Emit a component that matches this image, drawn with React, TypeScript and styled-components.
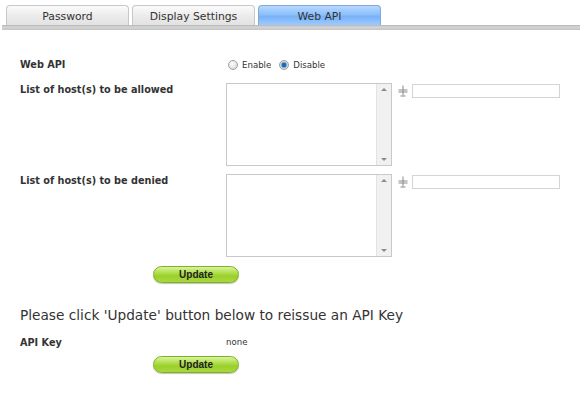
import * as React from 'react';
import { useState } from 'react';
import styled, { createGlobalStyle } from 'styled-components';

const GlobalStyle = createGlobalStyle`
  html, body {
    margin: 0;
    padding: 0;
    background: #ffffff;
  }
  body {
    font-family: "DejaVu Sans", Verdana, sans-serif;
    color: #333333;
  }
`;

const Page = styled.div`
  width: 580px;
  height: 399px;
  overflow: hidden;
  background: #fff;
`;

const TabBar = styled.div`
  display: flex;
  gap: 3px;
  padding: 5px 0 0 6px;
  height: 20px;
`;

const Tab = styled.div<{ $active?: boolean }>`
  width: 123px;
  height: 20px;
  box-sizing: border-box;
  border: 1px solid ${(p) => (p.$active ? '#7fa8dc' : '#c8c8c8')};
  border-bottom: none;
  border-radius: 4px 4px 0 0;
  background: ${(p) =>
    p.$active
      ? 'linear-gradient(#b8d8ff 0%, #8cc0fb 45%, #78b2f8 55%, #9ccaff 100%)'
      : 'linear-gradient(#fbfbfb 0%, #ececec 50%, #e2e2e2 100%)'};
  display: flex;
  align-items: center;
  justify-content: center;
  font-family: "DejaVu Sans", Verdana, sans-serif;
  font-size: 10.8px;
  color: #333;
  padding-top: 2px;
`;

const TabLine = styled.div`
  height: 5px;
  margin-left: 2px;
  background: linear-gradient(#b4b4b4 0%, #d6d6d6 40%, #c4c4c4 100%);
`;

const Content = styled.div`
  padding: 28px 0 0 20px;
`;

const Row = styled.div<{ $h?: number }>`
  display: flex;
  align-items: flex-start;
  min-height: ${(p) => p.$h ?? 0}px;
`;

const Label = styled.div`
  width: 206px;
  font-family: "DejaVu Sans", Verdana, sans-serif;
  font-weight: bold;
  font-size: 9.7px;
  color: #333;
  line-height: 14px;
`;

const RadioGroup = styled.div`
  display: flex;
  align-items: center;
  gap: 4px;
  font-size: 8.6px;
  line-height: 14px;
  padding-left: 2px;
`;

const RadioDot = styled.span<{ $on?: boolean }>`
  width: 10px;
  height: 10px;
  border-radius: 50%;
  box-sizing: border-box;
  border: 1px solid #a0a0a0;
  background: ${(p) =>
    p.$on
      ? 'radial-gradient(circle, #1c6bb5 0 2px, #6fa8dc 2.5px, #d6d6d6 3.5px)'
      : 'radial-gradient(circle at 40% 35%, #ffffff, #cfcfcf)'};
  display: inline-block;
`;

const RadioLabel = styled.span`
  margin-right: 4px;
`;

const ListArea = styled.div`
  display: flex;
  align-items: flex-start;
`;

const ListBox = styled.div`
  width: 166px;
  height: 83px;
  box-sizing: border-box;
  border: 1px solid #c9c9c9;
  display: flex;
  justify-content: flex-end;
  background: #fff;
`;

const Scroll = styled.div`
  width: 14px;
  background: #f1f1f1;
  border-left: 1px solid #e2e2e2;
  display: flex;
  flex-direction: column;
  justify-content: space-between;
  align-items: center;
  padding: 4px 0;
`;

const Arrow = styled.span<{ $down?: boolean }>`
  width: 0;
  height: 0;
  border-left: 3px solid transparent;
  border-right: 3px solid transparent;
  ${(p) => (p.$down ? 'border-top: 3px solid #8a8a8a;' : 'border-bottom: 3px solid #8a8a8a;')}
`;

const PlusIcon = styled.svg`
  margin: 2px 4px 0 6px;
`;

const HostInput = styled.input`
  width: 148px;
  height: 14px;
  box-sizing: border-box;
  border: 1px solid #d4d4d4;
  padding: 0 2px;
  font-size: 9px;
  margin-top: 1px;
`;

const ButtonRow = styled.div`
  padding-left: 133px;
`;

const GreenButton = styled.button`
  width: 86px;
  height: 17px;
  border-radius: 9px;
  border: 1px solid #7db321;
  background: linear-gradient(#d9f3a0 0%, #b4e155 35%, #9bd02a 60%, #a9d83f 100%);
  box-shadow: 0 1px 1px rgba(0, 0, 0, 0.25);
  font-family: "Liberation Sans", Arial, sans-serif;
  font-weight: bold;
  font-size: 10px;
  color: #222;
  padding: 0;
  cursor: pointer;
`;

const Notice = styled.div`
  font-family: "DejaVu Sans", Verdana, sans-serif;
  font-size: 13.7px;
  line-height: 16px;
  color: #333;
  margin: 24px 0 13px;
`;

const Value = styled.div`
  font-size: 8.6px;
  line-height: 12px;
`;

const KeyRow = styled(Row)`
  margin-bottom: 2px;
`;

const Plus = () => (
  <PlusIcon width="10" height="12" viewBox="0 0 10 12">
    <path d="M5 0.5v10M0.5 5h9M0.5 7h9M2.5 11h5" stroke="#8a8a8a" strokeWidth="1" fill="none" />
  </PlusIcon>
);

const HostList = () => (
  <ListArea>
    <ListBox>
      <Scroll>
        <Arrow />
        <Arrow $down />
      </Scroll>
    </ListBox>
    <Plus />
    <HostInput type="text" />
  </ListArea>
);

export default function App() {
  const [enabled] = useState(false);
  const tabs = ['Password', 'Display Settings', 'Web API'];

  return (
    <Page>
      <GlobalStyle />
      <TabBar>
        {tabs.map((t) => (
          <Tab key={t} $active={t === 'Web API'}>
            {t}
          </Tab>
        ))}
      </TabBar>
      <TabLine />
      <Content>
        <Row $h={25}>
          <Label>Web API</Label>
          <RadioGroup>
            <RadioDot $on={enabled} />
            <RadioLabel>Enable</RadioLabel>
            <RadioDot $on={!enabled} />
            <RadioLabel>Disable</RadioLabel>
          </RadioGroup>
        </Row>
        <Row $h={91}>
          <Label>List of host(s) to be allowed</Label>
          <HostList />
        </Row>
        <Row $h={89}>
          <Label>List of host(s) to be denied</Label>
          <HostList />
        </Row>
        <ButtonRow>
          <GreenButton>Update</GreenButton>
        </ButtonRow>
        <Notice>Please click 'Update' button below to reissue an API Key</Notice>
        <KeyRow $h={15}>
          <Label>API Key</Label>
          <Value>none</Value>
        </KeyRow>
        <ButtonRow>
          <GreenButton>Update</GreenButton>
        </ButtonRow>
      </Content>
    </Page>
  );
}
